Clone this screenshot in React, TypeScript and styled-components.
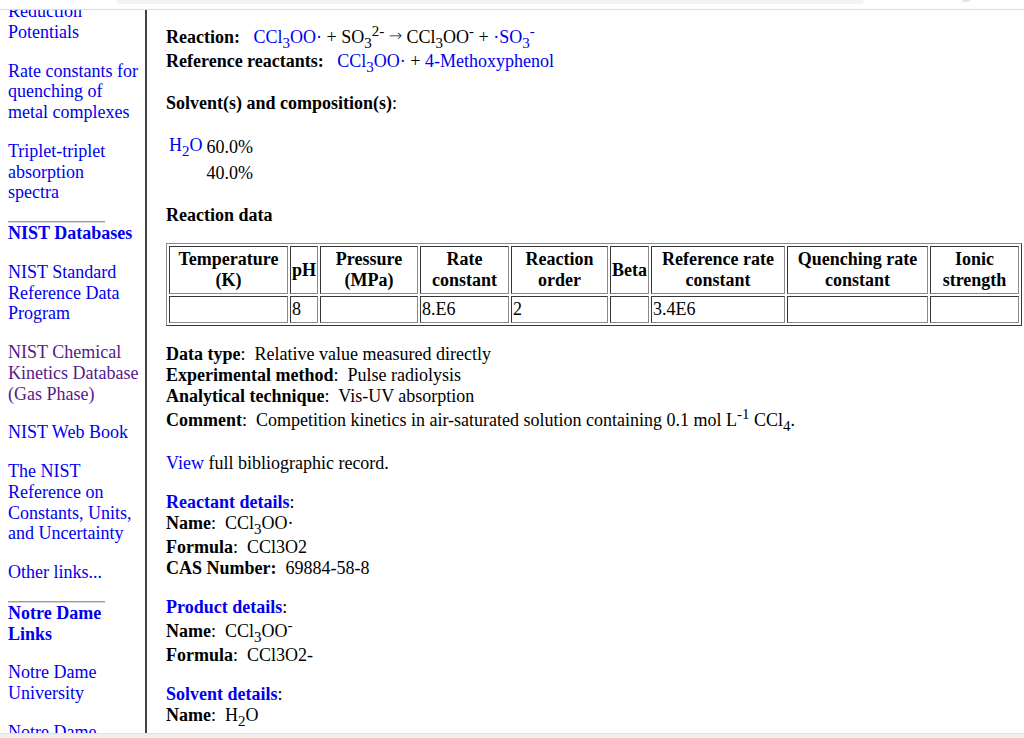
import React from "react";
import styled, { createGlobalStyle } from "styled-components";

const Global = createGlobalStyle`
  html, body { margin: 0; padding: 0; background: #fff; }
  body {
    font-family: "Liberation Serif", "Times New Roman", serif;
    font-size: 18px;
    color: #000;
  }
`;

const Screen = styled.div`
  width: 1024px;
  height: 738px;
  display: flex;
  flex-direction: column;
  overflow: hidden;
  background: #fff;
`;

const Chrome = styled.div`
  flex: none;
  height: 9px;
  border-bottom: 1px solid #dadce0;
  display: flex;
  align-items: flex-start;
  padding-left: 116px;
  gap: 98px;
`;

const AddressBar = styled.div`
  width: 748px;
  height: 4px;
  background: #f1f3f4;
  border-radius: 0 0 8px 8px;
`;

const ChromeDot = styled.div`
  width: 8px;
  height: 2px;
  background: #e3e5e8;
  border-radius: 0 0 4px 4px;
`;

const Viewport = styled.div`
  flex: 1;
  min-height: 0;
  overflow: hidden;
  display: flex;
  align-items: stretch;
  padding-left: 8px;
`;

const BottomBar = styled.div`
  flex: none;
  height: 4px;
  background: #efefef;
  border-top: 1px solid #e2e2e2;
`;

const Sidebar = styled.nav`
  flex: none;
  width: 137px;
  margin-top: -9px;
  line-height: 20.75px;
`;

const NavItem = styled.p<{ $bold?: boolean }>`
  margin: 0 0 18px;
  font-weight: ${(p) => (p.$bold ? "bold" : "normal")};
`;

const NavLink = styled.a<{ $visited?: boolean }>`
  color: ${(p) => (p.$visited ? "#551a8b" : "#0000ee")};
  text-decoration: none;
`;

const Rule = styled.hr`
  width: 97px;
  height: 0;
  margin: 0;
  border: none;
  border-top: 1px solid #9c9c9c;
  border-bottom: 1px solid #d6d6d6;
`;

const Content = styled.main`
  flex: 1;
  min-width: 0;
  border-left: 2px solid #444;
  padding: 14px 2px 0 19px;
`;

const Block = styled.p<{ $mt?: number }>`
  margin: ${(p) => p.$mt ?? 0}px 0 0;
`;

const A = styled.a`
  color: #0000ee;
  text-decoration: none;
`;

const Sub = styled.sub`
  font-size: 15px;
  line-height: 1;
  vertical-align: -5px;
`;

const Sup = styled.sup`
  font-size: 15px;
  line-height: 1;
  vertical-align: 7px;
`;

const Arrow = styled.span`
  font-family: "DejaVu Sans", sans-serif;
  font-size: 16px;
  font-weight: 200;
  line-height: 1;
  vertical-align: 2px;
  color: #222;
`;

const SolventTable = styled.table<{ $mt?: number }>`
  margin-top: ${(p) => p.$mt ?? 0}px;
  border-spacing: 2px;
  td {
    padding: 1px;
  }
`;

const DataTable = styled.table<{ $mt?: number }>`
  margin-top: ${(p) => p.$mt ?? 0}px;
  width: 100%;
  table-layout: fixed;
  border-collapse: separate;
  border-spacing: 2px;
  border: 1px outset #8a8a8a;
`;

const Th = styled.th<{ $w: number }>`
  box-sizing: border-box;
  width: ${(p) => p.$w}px;
  border: 1px inset #8a8a8a;
  padding: 2px 1px;
  font-weight: bold;
  text-align: center;
  vertical-align: middle;
`;

const Td = styled.td`
  border: 1px inset #8a8a8a;
  padding: 2px 1px;
  text-align: left;
  vertical-align: middle;
`;

const columns: [string, number][] = [
  ["Temperature (K)", 119],
  ["pH", 28],
  ["Pressure (MPa)", 98],
  ["Rate constant", 89],
  ["Reaction order", 97],
  ["Beta", 39],
  ["Reference rate constant", 134],
  ["Quenching rate constant", 141],
  ["Ionic strength", 89],
];

const row = ["", "8", "", "8.E6", "2", "", "3.4E6", "", ""];

const sp = "\u00a0\u00a0 ";
const sp2 = "\u00a0 ";

export default function App() {
  return (
    <>
      <Global />
      <Screen>
        <Chrome>
          <AddressBar />
          <ChromeDot />
        </Chrome>
        <Viewport>
          <Sidebar>
            <NavItem>
              <NavLink href="#">Reduction Potentials</NavLink>
            </NavItem>
            <NavItem>
              <NavLink href="#">Rate constants for quenching of metal complexes</NavLink>
            </NavItem>
            <NavItem>
              <NavLink href="#">
                Triplet-triplet absorption
                <br />
                spectra
              </NavLink>
            </NavItem>
            <Rule />
            <NavItem $bold>
              <NavLink href="#">NIST Databases</NavLink>
            </NavItem>
            <NavItem>
              <NavLink href="#">NIST Standard Reference Data Program</NavLink>
            </NavItem>
            <NavItem>
              <NavLink href="#" $visited>
                NIST Chemical Kinetics Database (Gas Phase)
              </NavLink>
            </NavItem>
            <NavItem>
              <NavLink href="#">NIST Web Book</NavLink>
            </NavItem>
            <NavItem>
              <NavLink href="#">The NIST Reference on Constants, Units, and Uncertainty</NavLink>
            </NavItem>
            <NavItem>
              <NavLink href="#">Other links...</NavLink>
            </NavItem>
            <Rule />
            <NavItem $bold>
              <NavLink href="#">Notre Dame Links</NavLink>
            </NavItem>
            <NavItem>
              <NavLink href="#">Notre Dame University</NavLink>
            </NavItem>
            <NavItem>
              <NavLink href="#">Notre Dame Radiation Laboratory</NavLink>
            </NavItem>
          </Sidebar>
          <Content>
            <Block>
              <b>Reaction:</b>
              {sp}
              <A href="#">
                CCl<Sub>3</Sub>OO·
              </A>{" "}
              + SO<Sub>3</Sub>
              <Sup>2-</Sup> <Arrow>→</Arrow> CCl<Sub>3</Sub>OO<Sup>-</Sup> +{" "}
              <A href="#">
                ·SO<Sub>3</Sub>
                <Sup>-</Sup>
              </A>
              <br />
              <b>Reference reactants:</b>
              {sp}
              <A href="#">
                CCl<Sub>3</Sub>OO·
              </A>{" "}
              + <A href="#">4-Methoxyphenol</A>
            </Block>
            <Block $mt={18}>
              <b>Solvent(s) and composition(s)</b>:
            </Block>
            <SolventTable $mt={18}>
              <tbody>
                <tr>
                  <td>
                    <A href="#">
                      H<Sub>2</Sub>O
                    </A>
                  </td>
                  <td>60.0%</td>
                </tr>
                <tr>
                  <td></td>
                  <td>40.0%</td>
                </tr>
              </tbody>
            </SolventTable>
            <Block $mt={18}>
              <b>Reaction data</b>
            </Block>
            <DataTable $mt={17}>
              <thead>
                <tr>
                  {columns.map(([label, w]) => (
                    <Th key={label} $w={w}>
                      {label}
                    </Th>
                  ))}
                </tr>
              </thead>
              <tbody>
                <tr>
                  {row.map((v, i) => (
                    <Td key={i}>{v}</Td>
                  ))}
                </tr>
              </tbody>
            </DataTable>
            <Block $mt={18}>
              <b>Data type</b>:{sp2}Relative value measured directly
              <br />
              <b>Experimental method</b>:{sp2}Pulse radiolysis
              <br />
              <b>Analytical technique</b>:{sp2}Vis-UV absorption
              <br />
              <b>Comment</b>:{sp2}Competition kinetics in air-saturated solution containing 0.1 mol L
              <Sup>-1</Sup> CCl<Sub>4</Sub>.
            </Block>
            <Block $mt={19}>
              <A href="#">View</A> full bibliographic record.
            </Block>
            <Block $mt={18}>
              <A href="#">
                <b>Reactant details</b>
              </A>
              :
              <br />
              <b>Name</b>:{sp2}CCl<Sub>3</Sub>OO·
              <br />
              <b>Formula</b>:{sp2}CCl3O2
              <br />
              <b>CAS Number:</b>
              {sp2}69884-58-8
            </Block>
            <Block $mt={18}>
              <A href="#">
                <b>Product details</b>
              </A>
              :
              <br />
              <b>Name</b>:{sp2}CCl<Sub>3</Sub>OO<Sup>-</Sup>
              <br />
              <b>Formula</b>:{sp2}CCl3O2-
            </Block>
            <Block $mt={18}>
              <A href="#">
                <b>Solvent details</b>
              </A>
              :
              <br />
              <b>Name</b>:{sp2}H<Sub>2</Sub>O
            </Block>
          </Content>
        </Viewport>
        <BottomBar />
      </Screen>
    </>
  );
}
